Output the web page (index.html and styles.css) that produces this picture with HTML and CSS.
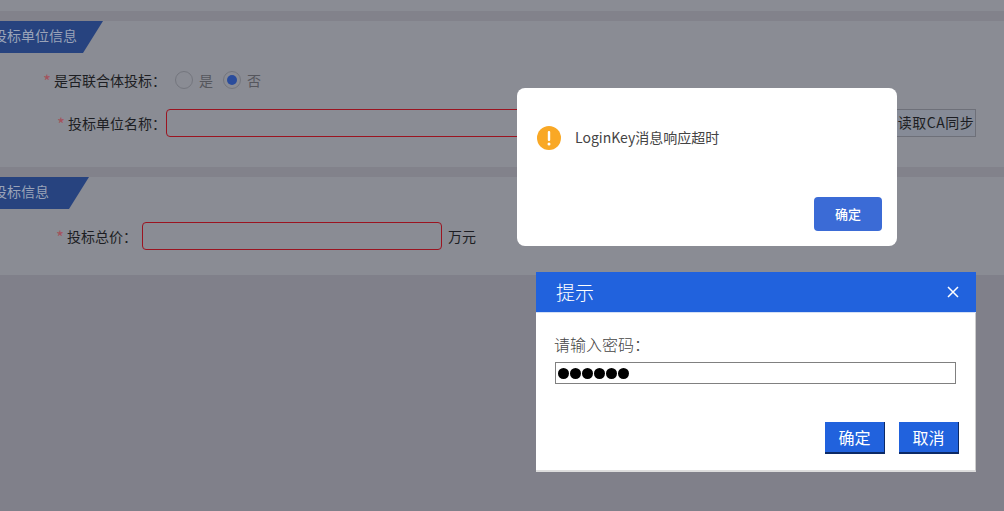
FILE: index.html
```html
<!DOCTYPE html>
<html lang="zh">
<head>
<meta charset="utf-8">
<title>投标信息</title>
<link rel="stylesheet" href="styles.css">
</head>
<body>
<main class="page">
  <section class="section section-unit">
    <h2 class="banner banner-unit"><span>投标单位信息</span></h2>
    <div class="row row-radio">
      <label class="label label-wide"><i>*</i>是否联合体投标：</label>
      <div class="radios">
        <span class="radio"></span><span class="radio-text">是</span>
        <span class="radio radio-on"></span><span class="radio-text">否</span>
      </div>
    </div>
    <div class="row row-name">
      <label class="label label-wide"><i>*</i>投标单位名称：</label>
      <div class="field field-name"></div>
      <button class="ca-btn">读取CA同步</button>
    </div>
  </section>
  <section class="section section-bid">
    <h2 class="banner banner-bid"><span>投标信息</span></h2>
    <div class="row row-price">
      <label class="label label-narrow"><i>*</i>投标总价：</label>
      <div class="field field-price"></div>
      <span class="unit">万元</span>
    </div>
  </section>
</main>

<div class="alert">
  <div class="alert-body">
    <svg class="alert-icon" viewBox="0 0 24 24" width="24" height="24" aria-hidden="true">
      <circle cx="12" cy="12" r="12" fill="#f9a825"/>
      <rect x="10.8" y="5" width="2.4" height="10" rx="1.1" fill="#fff"/>
      <circle cx="12" cy="18" r="1.5" fill="#fff"/>
    </svg>
    <p class="alert-text">LoginKey消息响应超时</p>
  </div>
  <div class="alert-foot"><button class="alert-btn">确定</button></div>
</div>

<div class="prompt">
  <header class="prompt-head">
    <span class="prompt-title">提示</span>
    <svg class="prompt-close" viewBox="0 0 12 12" width="12" height="12" aria-hidden="true">
      <path d="M1 1 L11 11 M11 1 L1 11" stroke="#fff" stroke-width="1.5" fill="none"/>
    </svg>
  </header>
  <div class="prompt-body">
    <div class="prompt-label">请输入密码：</div>
    <div class="pwd"><b></b><b></b><b></b><b></b><b></b><b></b></div>
  </div>
  <div class="prompt-foot">
    <button class="prompt-btn">确定</button>
    <button class="prompt-btn">取消</button>
  </div>
</div>
</body>
</html>
```
FILE: styles.css
```css
* { box-sizing: border-box; }
html, body { margin: 0; height: 100%; overflow: hidden; }
body {
  position: relative;
  width: 1004px;
  height: 511px;
  background: #80808a;
  font-family: "Noto Sans CJK SC", "Liberation Sans", sans-serif;
  font-size: 14px;
  color: #1d1e23;
}
.page { padding-top: 21px; background: linear-gradient(#8a8c94 11px, #82828b 11px); }
.section { background: #8a8c94; }
.section-unit { height: 146px; margin-bottom: 10px; }
.section-bid { height: 98px; }

.banner {
  margin: 0;
  height: 32px;
  background: #27437f;
  color: #9aa3b8;
  font-size: 14px;
  font-weight: 400;
  line-height: 28px;
  overflow: hidden;
}
.banner span { display: block; margin-left: -7px; white-space: nowrap; }
.banner-unit { width: 103px; clip-path: polygon(0 0, 100% 0, 83px 100%, 0 100%); }
.banner-bid { width: 89px; clip-path: polygon(0 0, 100% 0, 69px 100%, 0 100%); }

.row { display: flex; align-items: center; }
.row-radio { height: 28px; margin-top: 13px; }
.row-name { height: 28px; margin-top: 15px; }
.row-price { height: 28px; margin-top: 13px; }

.label { flex: none; text-align: right; white-space: nowrap; line-height: 18px; }
.label i { font-style: normal; font-size: 17px; line-height: 14px; vertical-align: -2px; color: #a4525c; margin-right: 3px; }
.label-wide { width: 166px; }
.label-narrow { width: 137px; margin-right: 5px; }

.radios { display: flex; align-items: center; margin-left: 9px; }
.radio {
  width: 18px;
  height: 18px;
  border: 1px solid #74767e;
  border-radius: 50%;
  margin-right: 6px;
  display: flex;
  align-items: center;
  justify-content: center;
}
.radio-on::after {
  content: "";
  width: 10px;
  height: 10px;
  border-radius: 50%;
  background: #2a4c9c;
}
.radio-text { color: #55565d; margin-right: 10px; }

.field { height: 28px; border: 1px solid #9b1420; border-radius: 4px; flex: none; }
.field-name { width: 724px; }
.field-price { width: 300px; }
.unit { margin-left: 6px; }

.ca-btn {
  flex: none;
  width: 86px;
  height: 28px;
  padding: 0 0 2px 6px;
  border: 1px solid #6e7079;
  background: #868b97;
  color: #1d1e23;
  font: inherit;
  letter-spacing: 0.5px;
  white-space: nowrap;
  text-align: center;
}

.alert {
  position: absolute;
  left: 517px;
  top: 88px;
  width: 380px;
  height: 158px;
  background: #fff;
  border-radius: 8px;
  display: flex;
  flex-direction: column;
  justify-content: space-between;
}
.alert-body { display: flex; align-items: center; padding: 38px 20px 0; }
.alert-icon { flex: none; margin-right: 14px; }
.alert-text { margin: -3px 0 0; color: #444; font-size: 14px; line-height: 24px; }
.alert-foot { display: flex; justify-content: flex-end; padding: 0 15px 15px; }
.alert-btn {
  width: 68px;
  height: 34px;
  padding: 0 0 2px;
  border: 0;
  border-radius: 4px;
  background: #3b6bd6;
  color: #fff;
  font: inherit;
  font-size: 13px;
  font-weight: 500;
}

.prompt {
  position: absolute;
  left: 536px;
  top: 272px;
  width: 440px;
  height: 200px;
  background: #fff;
  border-right: 1px solid #ccc;
  border-bottom: 2px solid #ddd;
  display: flex;
  flex-direction: column;
}
.prompt-head {
  flex: none;
  height: 41px;
  margin-right: -1px;
  background: #2162dd;
  border-bottom: 1px solid #d4e0f5;
  color: #fff;
  display: flex;
  align-items: center;
  justify-content: space-between;
  padding: 0 17px 0 20px;
}
.prompt-title { font-size: 19px; font-weight: 300; line-height: 40px; }
.prompt-close { display: block; }
.prompt-body { padding: 19px 20px 0 19px; }
.prompt-label { color: #444; font-size: 16px; line-height: 24px; font-weight: 300; margin-left: -1px; }
.pwd {
  margin-top: 6px;
  height: 22px;
  width: 401px;
  border: 1px solid #808080;
  padding-left: 2px;
  display: flex;
  align-items: center;
  gap: 1px;
}
.pwd b { width: 11px; height: 11px; border-radius: 50%; background: #000; }
.prompt-foot {
  margin-top: auto;
  display: flex;
  justify-content: flex-end;
  gap: 14px;
  padding: 0 16px 16px 0;
}
.prompt-btn {
  width: 60px;
  height: 32px;
  padding: 0;
  border: 0;
  border-right: 1px solid #0c2a66;
  border-bottom: 2px solid #0c2a66;
  background: #2162dd;
  color: #fff;
  font: inherit;
  font-size: 16px;
  font-weight: 400;
}
```
